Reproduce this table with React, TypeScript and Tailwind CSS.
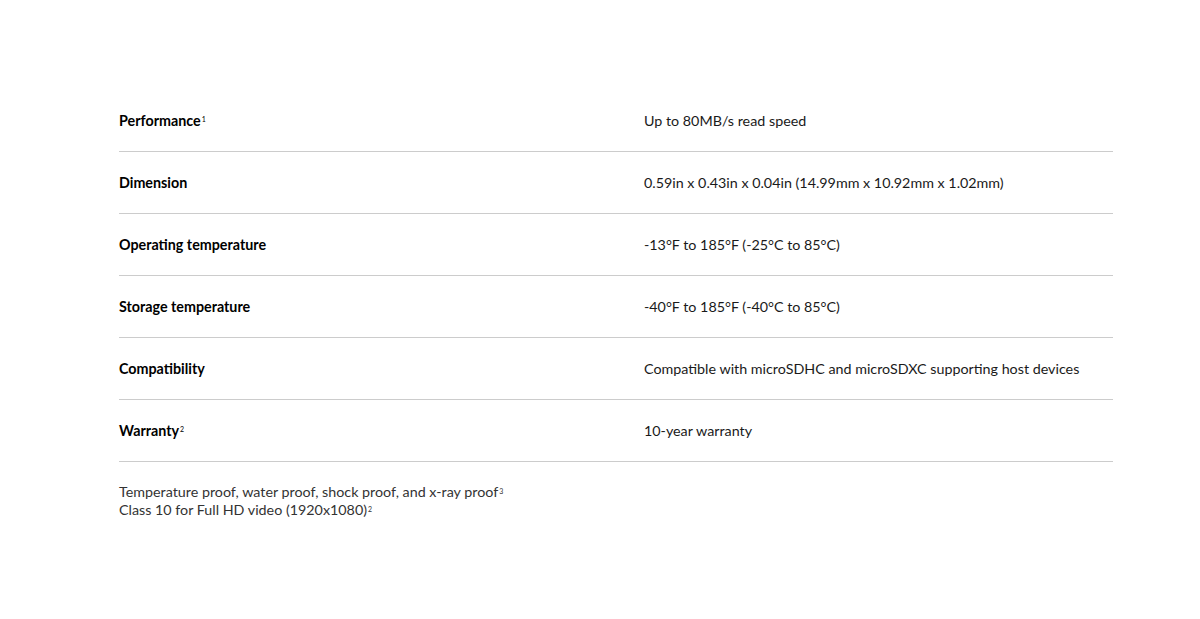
const specs = [
  { label: "Performance", sup: "1", value: "Up to 80MB/s read speed" },
  { label: "Dimension", value: "0.59in x 0.43in x 0.04in (14.99mm x 10.92mm x 1.02mm)" },
  { label: "Operating temperature", value: "-13°F to 185°F (-25°C to 85°C)" },
  { label: "Storage temperature", value: "-40°F to 185°F (-40°C to 85°C)" },
  { label: "Compatibility", value: "Compatible with microSDHC and microSDXC supporting host devices" },
  { label: "Warranty", sup: "2", value: "10-year warranty" },
];

export default function App() {
  return (
    <div className="min-h-[619px] w-full bg-white font-['Lato','Liberation_Sans',sans-serif] text-[14.3px] text-[#1a1a1a]">
      <div className="ml-[119px] w-[994px] pt-[90px]">
        {specs.map((row) => (
          <div
            key={row.label}
            className="grid h-[62px] grid-cols-[525px_1fr] items-center border-b border-[#cccccc]"
          >
            <div className="font-bold text-black">
              {row.label}
              {row.sup && <sup className="ml-px text-[7px] font-normal">{row.sup}</sup>}
            </div>
            <div>{row.value}</div>
          </div>
        ))}
        <div className="pt-[21px] leading-[18px] text-[#333]">
          <p>
            Temperature proof, water proof, shock proof, and x-ray proof
            <sup className="ml-px text-[7px]">3</sup>
          </p>
          <p>
            Class 10 for Full HD video (1920x1080)<sup className="ml-px text-[7px]">2</sup>
          </p>
        </div>
      </div>
    </div>
  );
}
